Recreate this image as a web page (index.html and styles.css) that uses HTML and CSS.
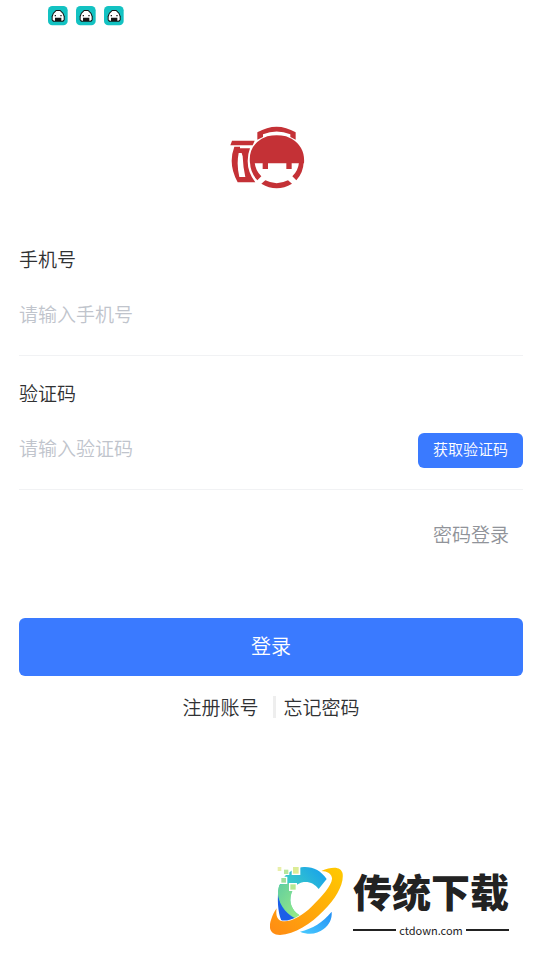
FILE: index.html
```html
<!DOCTYPE html>
<html lang="zh-CN">
<head>
<meta charset="utf-8">
<meta name="viewport" content="width=device-width, initial-scale=1">
<title>登录</title>
<link rel="stylesheet" href="styles.css">
</head>
<body>
<svg width="0" height="0" class="defs" aria-hidden="true">
  <symbol id="riceball" viewBox="0 0 60 60">
    <rect width="59" height="58" rx="13" fill="#13c2c2"/>
    <path d="M24 12h13l9 9 4 10v11l-4 5H15l-4-5V31l4-10z" fill="#151515"/>
    <path d="M25 15h11l8 8 3 9v9l-4 3H18l-4-3v-9l3-9z" fill="#fff"/>
    <path d="M21 35h19v10H21zM20 27h4v4h-4zM37 27h4v4h-4z" fill="#151515"/>
  </symbol>
</svg>
<header class="status">
  <svg class="status-icon" aria-hidden="true"><use href="#riceball"/></svg>
  <svg class="status-icon" aria-hidden="true"><use href="#riceball"/></svg>
  <svg class="status-icon" aria-hidden="true"><use href="#riceball"/></svg>
</header>
<main class="page">
  <svg class="logo" viewBox="30 30 228 195" aria-hidden="true">
    <g fill="#c43136">
      <path d="M36 77h68l-6 14H31z"/>
      <path fill-rule="evenodd" d="M43 95h17v5h30q-7 18-7 38 0 35 23 64H53q-30-54-10-107zM56 114q-7 35 2 72h18q-7-31-8-62l-3-10z"/>
      <path d="M112 52q58-34 115 0v22l-16-8v-8q-41-17-82 0v8l-17 8z"/>
      <path d="M90 145Q84 96 125 71l17-7q28-6 56 0l17 7q41 25 37 74h-37v17h-16v-17h-55v17h-16v-17z"/>
      <path d="M90 142h14q2 25 20 42l-12 12Q91 173 90 142zM251 142h-14q-2 25-20 42l12 12q21-23 22-54z"/>
      <path d="M136 196q34 17 68 0l12 10q-46 27-92 0z"/>
    </g>
  </svg>
  <form class="form">
    <div class="field">
      <label class="label" for="phone">手机号</label>
      <div class="row"><input class="input" id="phone" type="tel" placeholder="请输入手机号"></div>
    </div>
    <div class="field">
      <label class="label" for="code">验证码</label>
      <div class="row">
        <input class="input" id="code" type="text" placeholder="请输入验证码">
        <button class="code-button" type="button">获取验证码</button>
      </div>
    </div>
    <a class="switch" href="#password">密码登录</a>
    <button class="submit" type="submit">登录</button>
  </form>
  <nav class="links">
    <a class="link link-register" href="#register">注册账号</a>
    <a class="link" href="#forgot">忘记密码</a>
  </nav>
</main>
<footer class="brand">
  <svg class="brand-mark" viewBox="6 9 222 210" aria-hidden="true">
    <defs>
      <linearGradient id="blue" x1="0" y1="1" x2="1" y2="0"><stop offset="0" stop-color="#79e58b"/><stop offset=".5" stop-color="#36c7cb"/><stop offset="1" stop-color="#149cf0"/></linearGradient>
      <linearGradient id="green" x1="0" y1="0" x2="1" y2="1"><stop offset="0" stop-color="#62cda0"/><stop offset="1" stop-color="#a0f080"/></linearGradient>
      <linearGradient id="orange" x1="0" y1="1" x2="1" y2="0"><stop offset="0" stop-color="#ff8a14"/><stop offset="1" stop-color="#ffca00"/></linearGradient>
      <linearGradient id="tail" x1="0" y1="1" x2="1" y2="0"><stop offset="0" stop-color="#48cbff"/><stop offset="1" stop-color="#238ef4"/></linearGradient>
    </defs>
    <path d="M31 80C27 120 31 160 46 184l52-16C66 156 40 126 31 80z" fill="#1c5fe8"/>
    <path d="M176 48C160 24 136 11 108 12 64 16 32 48 30 92c4 40 30 66 62 78l16-6C84 154 68 136 67 112c0-30 16-52 40-55 18-2 34 6 45 21z" fill="url(#blue)"/>
    <path d="M34 66C27 88 31 108 42 126c14 24 32 38 54 44l12-6C84 154 68 136 67 112c0-16 5-30 14-40L66 60z" fill="url(#green)"/>
    <path d="M96 206c38-9 68-28 95-60 2 22-8 40-24 52-20 16-46 18-71 8z" fill="url(#tail)"/>
    <path d="M160 24C196 8 220 12 224 32c4 34-22 76-56 110C128 184 80 214 36 216 6 216 0 194 10 168c4-12 9-22 16-32-3 18 0 34 14 38 26 6 62-14 92-44C164 98 190 68 192 48c1-14-14-24-32-24z" fill="url(#orange)" stroke="#fff" stroke-width="5" paint-order="stroke"/>
    <path d="M71 9h26v27H71zM44 16h20v20H44zM36 41h22v22H36zM63 60h24v24H63z" fill="#fff"/>
    <path d="M75 12h17v20H75z" fill="#dcec95"/>
    <path d="M29 12h11v12H29z" fill="#e9efaa"/>
    <path d="M48 20h13v13H48z" fill="#b7e69b"/>
    <path d="M40 45h14v14H40z" fill="#a0df9b"/>
    <path d="M67 64h16v16H67z" fill="#b5e993"/>
  </svg>
  <div class="brand-text">
    <div class="brand-name">传统下载</div>
    <div class="brand-site">ctdown.com</div>
  </div>
</footer>
</body>
</html>
```
FILE: styles.css
```css
* {
  box-sizing: border-box;
}

body {
  margin: 0;
  min-height: 100vh;
  display: flex;
  flex-direction: column;
  background: #fff;
  color: #303133;
  font: 350 19px/28px "Noto Sans CJK SC", sans-serif;
}

input,
button {
  font: inherit;
  border: 0;
  padding: 0;
}

a {
  color: inherit;
  text-decoration: none;
}

.defs {
  position: absolute;
}

.status {
  display: flex;
  gap: 8px;
  padding: 6px 48px;
}

.status-icon {
  width: 20px;
  height: 20px;
}

.page {
  flex: 1;
  display: flex;
  flex-direction: column;
  padding: 93px 17px 0 19px;
}

.logo {
  width: 76px;
  height: 65px;
  align-self: center;
  margin-right: 6px;
}

.form {
  display: flex;
  flex-direction: column;
  margin-top: 32px;
}

.field {
  padding: 23px 0 14px;
  border-bottom: 1px solid #f1f2f4;
}

.label {
  display: block;
  margin-bottom: 14px;
}

.row {
  display: flex;
  align-items: center;
  height: 54px;
}

.input {
  flex: 1;
  min-width: 0;
  height: 28px;
  background: none;
  color: inherit;
  outline: 0;
}

.input::placeholder {
  color: #c0c4cc;
  opacity: 1;
}

.code-button {
  width: 105px;
  height: 35px;
  margin-top: 4px;
  padding-bottom: 2px;
  border-radius: 6px;
  background: #3a7aff;
  color: #fff;
  font-size: 15px;
}

.switch {
  align-self: flex-end;
  margin: 30px 14px 0;
  color: #909399;
}

.submit {
  height: 58px;
  margin-top: 70px;
  padding-bottom: 2px;
  border-radius: 6px;
  background: #3a7aff;
  color: #fff;
  font-size: 20px;
}

.links {
  display: flex;
  justify-content: center;
  margin-top: 20px;
  line-height: 22px;
}

.link-register {
  padding-right: 14px;
  margin-right: 8px;
  border-right: 3px solid #eee;
}

.brand {
  display: flex;
  justify-content: flex-end;
  gap: 9px;
  padding: 0 31px 22px;
}

.brand-mark {
  width: 74px;
  height: 70px;
}

.brand-text {
  width: 156px;
  color: #222;
}

.brand-name {
  margin-bottom: 8px;
  font-size: 39px;
  font-weight: 900;
  line-height: 48px;
  white-space: nowrap;
}

.brand-site {
  display: flex;
  align-items: center;
  gap: 3px;
  font-size: 11px;
  font-weight: 400;
  line-height: 16px;
}

.brand-site::before,
.brand-site::after {
  content: "";
  flex: 1;
  height: 2px;
  background: #222;
}
```
